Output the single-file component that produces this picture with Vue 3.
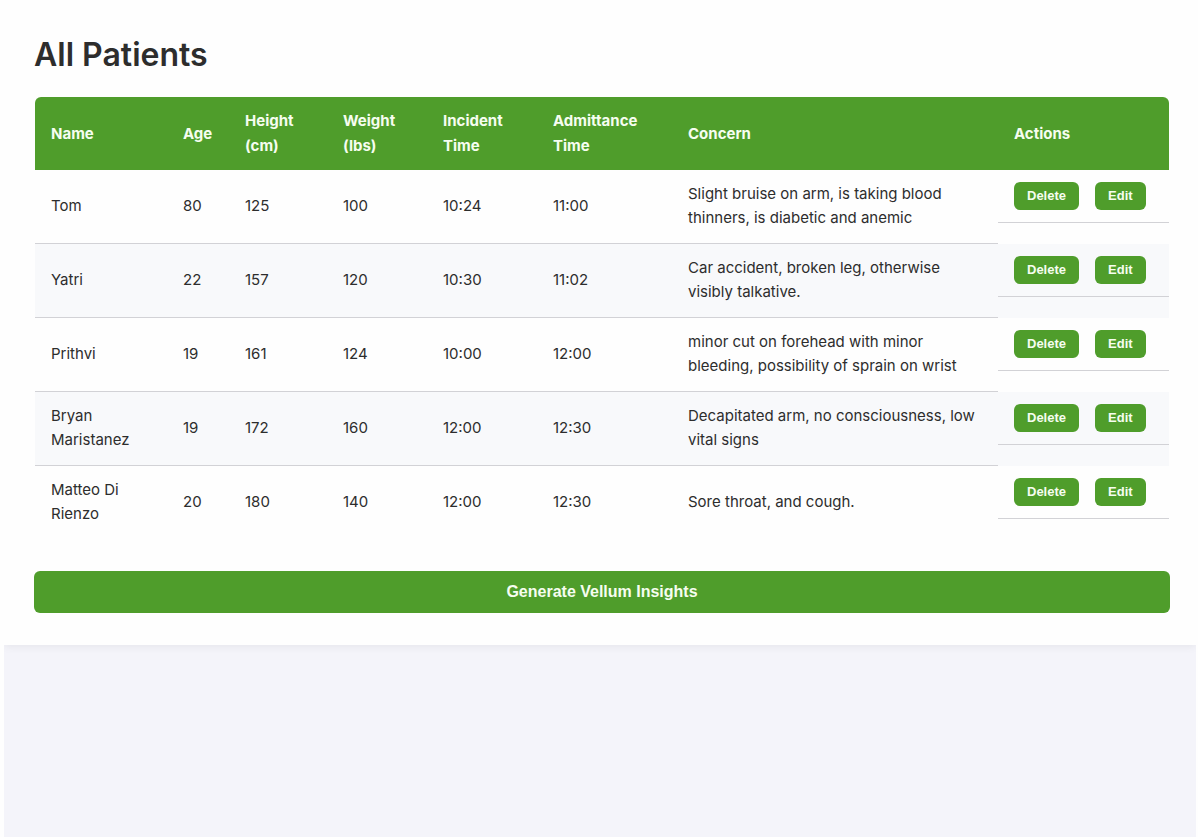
<script setup>
const patients = [
  { name: 'Tom', age: 80, height: 125, weight: 100, incident: '10:24', admitted: '11:00', concern: 'Slight bruise on arm, is taking blood thinners, is diabetic and anemic' },
  { name: 'Yatri', age: 22, height: 157, weight: 120, incident: '10:30', admitted: '11:02', concern: 'Car accident, broken leg, otherwise visibly talkative.' },
  { name: 'Prithvi', age: 19, height: 161, weight: 124, incident: '10:00', admitted: '12:00', concern: 'minor cut on forehead with minor bleeding, possibility of sprain on wrist' },
  { name: 'Bryan Maristanez', age: 19, height: 172, weight: 160, incident: '12:00', admitted: '12:30', concern: 'Decapitated arm, no consciousness, low vital signs' },
  { name: 'Matteo Di Rienzo', age: 20, height: 180, weight: 140, incident: '12:00', admitted: '12:30', concern: 'Sore throat, and cough.' },
]
</script>

<template>
  <div class="page">
    <main class="card">
      <h1>All Patients</h1>
      <table>
        <colgroup>
          <col class="c-name" />
          <col class="c-age" />
          <col class="c-height" />
          <col class="c-weight" />
          <col class="c-incident" />
          <col class="c-admitted" />
          <col class="c-concern" />
          <col class="c-actions" />
        </colgroup>
        <thead>
          <tr>
            <th scope="col">Name</th>
            <th scope="col">Age</th>
            <th scope="col">Height<br />(cm)</th>
            <th scope="col">Weight<br />(lbs)</th>
            <th scope="col">Incident<br />Time</th>
            <th scope="col">Admittance<br />Time</th>
            <th scope="col">Concern</th>
            <th scope="col">Actions</th>
          </tr>
        </thead>
        <tbody>
          <tr v-for="p in patients" :key="p.name">
            <td>{{ p.name }}</td>
            <td>{{ p.age }}</td>
            <td>{{ p.height }}</td>
            <td>{{ p.weight }}</td>
            <td>{{ p.incident }}</td>
            <td>{{ p.admitted }}</td>
            <td>{{ p.concern }}</td>
            <td class="actions-cell">
              <div class="actions">
                <button type="button" class="small">Delete</button>
                <button type="button" class="small">Edit</button>
              </div>
            </td>
          </tr>
        </tbody>
      </table>
      <button type="button" class="generate">Generate Vellum Insights</button>
    </main>
  </div>
</template>

<style>
body {
  background: #fefefe;
}
</style>

<style scoped>
.page {
  min-height: 100vh;
  margin: 0 2px 0 4px;
  background: #f4f4fa;
  color: #2d2d2d;
  font-family: Inter, sans-serif;
  overflow: hidden;
}
.card {
  padding: 29px 26px 32px 30px;
  background: #fefefe;
  box-shadow: 0 2px 8px rgba(0, 0, 0, 0.06);
}
h1 {
  margin: 0 0 16px;
  font-size: 32px;
  line-height: 52px;
  font-weight: 600;
}
table {
  width: calc(100% - 2px);
  margin: 0 1px;
  table-layout: fixed;
  border-collapse: separate;
  border-spacing: 0;
  border-radius: 6px 6px 0 0;
  overflow: hidden;
  font-size: 15px;
  line-height: 24px;
}
.c-name { width: 132px; }
.c-age { width: 62px; }
.c-height { width: 98px; }
.c-weight { width: 100px; }
.c-incident { width: 110px; }
.c-admitted { width: 135px; }
.c-actions { width: 171px; }
th {
  box-sizing: border-box;
  height: 73px;
  padding: 11px 16px 12px;
  background: #4f9d2b;
  color: #f6fdf0;
  font-weight: 700;
  line-height: 25px;
  text-align: left;
}
td {
  box-sizing: border-box;
  height: 74px;
  padding: 11px 16px 13px;
  border-bottom: 1px solid #d2d2d6;
}
tbody tr:nth-child(even) {
  background: #f8f9fb;
}
tbody tr:last-child td {
  border-bottom: 0;
}
td.actions-cell {
  padding: 0;
  border-bottom: 0;
  vertical-align: top;
}
.actions {
  display: flex;
  gap: 16px;
  padding: 12px 16px;
  border-bottom: 1px solid #d2d2d6;
}
button {
  border: 0;
  border-radius: 6px;
  background: #4f9d2b;
  color: #f6fdf0;
  font-family: "Liberation Sans", Arial, sans-serif;
  font-weight: 700;
  cursor: pointer;
}
.small {
  padding: 6px 13px;
  font-size: 13px;
  line-height: 16px;
}
.generate {
  display: block;
  width: 100%;
  margin-top: 31px;
  padding: 11px;
  font-size: 16px;
  line-height: 20px;
}
</style>
